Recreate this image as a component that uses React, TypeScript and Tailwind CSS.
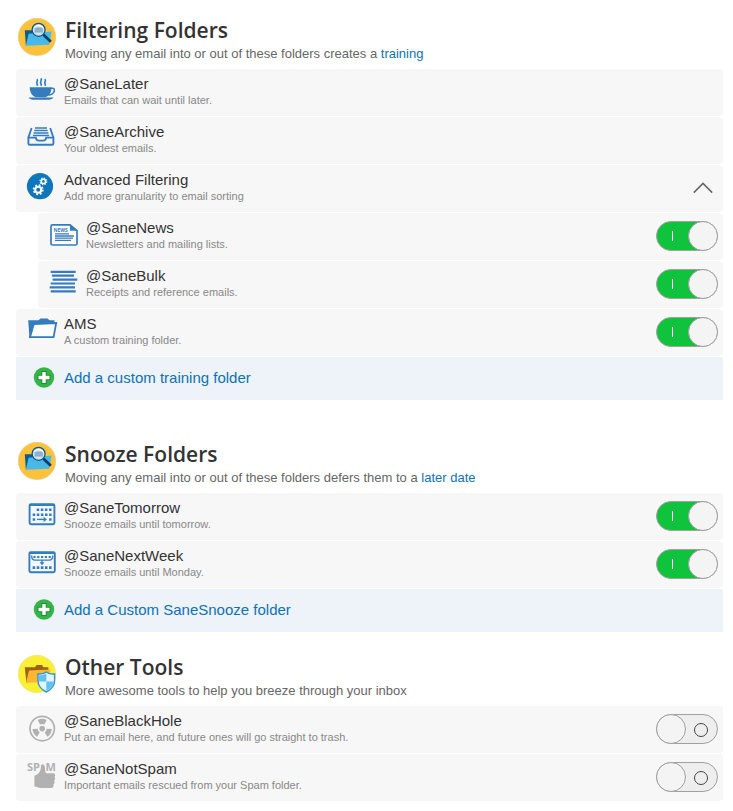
import { useState, type ReactNode } from "react";

type Folder = {
  id: string;
  name: string;
  description: string;
  icon: ReactNode;
  enabled?: boolean;
  nested?: boolean;
  expandable?: boolean;
};

type Section = {
  title: string;
  intro: string;
  link?: string;
  badge: ReactNode;
  folders: Folder[];
  addLabel?: string;
  spacing: string;
};

const BLUE = "#357cbf";
const GREY = "#b1b1b1";

function IconCell({ children }: { children: ReactNode }) {
  return (
    <svg viewBox="0 0 48 47" className="h-[47px] w-12 shrink-0" fill="none" aria-hidden="true">
      {children}
    </svg>
  );
}

function CupIcon() {
  return (
    <IconCell>
      <path d="M13.7 18.2H35.5C35.5 23 33.5 26.5 29.5 28.3H19.7C15.7 26.5 13.7 23 13.7 18.2Z" fill={BLUE} />
      <path d="M12.7 28.6H37.6C36.5 30 35 30.7 33 30.7H17C15 30.7 13.5 30 12.7 28.6Z" fill={BLUE} />
      <path d="M35 19.3H36.6C38.8 19.3 38.8 22 37.6 23.6C36.5 25.2 34.5 26 32.5 26.2" stroke={BLUE} strokeWidth="1.6" />
      <path
        d="M20.8 10.2C22.8 11.8 19.8 13 21 14.6C21.6 15.4 21.6 15.9 20.8 16.8M24.8 9.4C26.8 11.4 23.6 12.6 24.8 14.2C25.5 15.1 25.5 15.9 24.8 16.8M28.8 10.2C30.8 11.8 27.8 13 29 14.6C29.6 15.4 29.6 15.9 28.8 16.8"
        stroke={BLUE}
        strokeWidth="1.7"
      />
    </IconCell>
  );
}

function ArchiveIcon() {
  return (
    <IconCell>
      <path
        d="M12.4 20.6H19.8C20.2 22.8 21 23.6 22.6 23.6H27.4C29 23.6 29.8 22.8 30.2 20.6H37.4V26.4C37.4 27.4 37 27.8 36 27.8H13.8C12.8 27.8 12.4 27.4 12.4 26.4Z"
        stroke={BLUE}
        strokeWidth="1.9"
      />
      <path d="M12.4 20.6L15.6 11M37.4 20.6L34.2 11" stroke={BLUE} strokeWidth="1.8" />
      <path d="M19 11H31M18.3 13.5H31.7M17.6 16H32.4M16.9 18.5H33.1" stroke={BLUE} strokeWidth="1.4" />
    </IconCell>
  );
}

function GearsIcon() {
  return (
    <IconCell>
      <circle cx="24" cy="21.2" r="13.1" fill="#0e76bc" />
      <circle cx="22.2" cy="24.7" r="3" stroke="#fff" strokeWidth="2" />
      <circle cx="22.2" cy="24.7" r="4.6" stroke="#fff" strokeWidth="1.8" strokeDasharray="1.8 1.81" />
      <circle cx="27.4" cy="16.4" r="2.1" stroke="#fff" strokeWidth="1.5" />
      <circle cx="27.4" cy="16.4" r="3.3" stroke="#fff" strokeWidth="1.3" strokeDasharray="1.3 1.29" />
    </IconCell>
  );
}

function NewsIcon() {
  return (
    <IconCell>
      <path
        d="M14.5 11.8H32L39 17.6V30.4C39 31.4 38.4 32 37.4 32H14.5C13.5 32 13 31.4 13 30.4V13.4C13 12.4 13.5 11.8 14.5 11.8Z"
        fill="#fff"
        stroke={BLUE}
        strokeWidth="1.7"
      />
      <path d="M32 11.2V17.8H39.4Z" fill={BLUE} />
      <text x="15.4" y="18.6" fontSize="5" fontWeight="700" fontFamily="Open Sans, sans-serif" fill={BLUE}>
        NEWS
      </text>
      <path d="M17 20.8H31M17 23H36M17 25.2H35M17 27.4H33" stroke={BLUE} strokeWidth="1.3" />
    </IconCell>
  );
}

function BulkIcon() {
  return (
    <IconCell>
      <path d="M12.7 10.8H37.7M14 14.7H36M14.6 18.6H39.3M12.7 22.5H37M11.7 26.4H37M12.7 30.3H37.7" stroke={BLUE} strokeWidth="2.2" />
    </IconCell>
  );
}

function FolderIcon() {
  return (
    <IconCell>
      <path d="M12.2 11.2H22.5L24.5 9.6H31.5L33.5 11.2H38.5V14.4H18.5L14.6 29H13.5Z" fill={BLUE} />
      <path d="M17.8 15L40.2 14L37.6 28.2H14Z" fill="#fbfcfe" stroke={BLUE} strokeWidth="1.8" />
    </IconCell>
  );
}

function TomorrowIcon() {
  return (
    <IconCell>
      <rect x="13.6" y="11.2" width="24.8" height="20" rx="1.4" fill="#f3f8fd" stroke={BLUE} strokeWidth="1.9" />
      <path d="M13.4 12H38.4" stroke={BLUE} strokeWidth="2" />
      <path d="M20.7 16.8H35.6M16.7 21.7H35.6" stroke={BLUE} strokeWidth="2.5" strokeDasharray="2.5 1.6" />
      <path d="M16.7 26.4H19.2M33.1 26.4H35.6" stroke={BLUE} strokeWidth="2.5" />
      <path d="M21 26.4H29" stroke={BLUE} strokeWidth="1.4" />
      <path d="M27.6 23.8L31 26.4L27.6 29Z" fill={BLUE} />
    </IconCell>
  );
}

function NextWeekIcon() {
  return (
    <IconCell>
      <rect x="13.4" y="11.2" width="25.4" height="20" rx="1.4" fill="#f3f8fd" stroke={BLUE} strokeWidth="1.9" />
      <path d="M13.2 12H39" stroke={BLUE} strokeWidth="2" />
      <path d="M15.6 14.5C15.6 17.5 17 19.2 19 19.2H33.2C35.2 19.2 36.8 17.5 36.8 14.5" stroke={BLUE} strokeWidth="1.3" />
      <path d="M17.4 16H35.4" stroke={BLUE} strokeWidth="2.2" strokeDasharray="2.2 1.6" />
      <path d="M26 19V22" stroke={BLUE} strokeWidth="1.3" />
      <path d="M23.6 21.3H28.4L26 24.2Z" fill={BLUE} />
      <path d="M16.6 26.6H35.8" stroke={BLUE} strokeWidth="2.6" strokeDasharray="2.6 1.5" />
    </IconCell>
  );
}

function RadiationIcon() {
  return (
    <IconCell>
      <circle cx="26.2" cy="22.6" r="12.2" stroke={GREY} strokeWidth="1.7" />
      <circle cx="26.2" cy="22.6" r="2.8" fill={GREY} />
      {["rotate(0 26.2 22.6)", "rotate(120 26.2 22.6)", "rotate(240 26.2 22.6)"].map((turn) => (
        <path key={turn} d="M24.1 18.6L21.7 14A9.7 9.7 0 0 1 30.7 14L28.3 18.6A4.6 4.6 0 0 0 24.1 18.6Z" fill={GREY} transform={turn} />
      ))}
    </IconCell>
  );
}

function SpamIcon() {
  return (
    <IconCell>
      <g fontSize="11" fontWeight="700" fontFamily="Open Sans, sans-serif" fill={GREY}>
        <text x="11" y="17.4">SP</text>
        <text x="29.6" y="17.4">M</text>
      </g>
      <path
        d="M25.6 10.4C27.6 9.8 28.8 11.6 29 13.6C29.2 15.4 29 17.6 30 19.2H37C39.4 19.2 39.8 22 38.2 22.8C39.6 23.6 39.4 26 38 26.6C39 27.6 38.8 29.6 37.4 30.2C38.2 31.8 37 34 35 34H24.6C22.6 34 21.4 32.6 18.4 32.6V21.6C21 21 23.4 18.8 24.4 16.2C25 14.4 24.6 12 25.6 10.4Z"
        fill={GREY}
      />
    </IconCell>
  );
}

function PlusIcon() {
  return (
    <svg viewBox="0 0 48 43" className="h-[43px] w-12 shrink-0" fill="none" aria-hidden="true">
      <circle cx="28" cy="20.5" r="10.2" fill="#35b44a" />
      <path d="M28 14V27M21.5 20.5H34.5" stroke="#238c37" strokeWidth="5.4" />
      <path d="M28 15V26M22.5 20.5H33.5" stroke="#fff" strokeWidth="3.4" />
    </svg>
  );
}

function SearchFolderBadge() {
  return (
    <svg viewBox="0 0 38 38" className="size-[38px] shrink-0" fill="none" aria-hidden="true">
      <circle cx="19" cy="19" r="18.8" fill="#fdc13a" stroke="#d9cdb0" strokeWidth="0.5" />
      <path d="M6.8 12.3H14L16 14.2H30V17L9 27.3H7.8Z" fill="#0b5c8c" />
      <path d="M10.6 15.8L33.6 13.4L31.2 26.8L7.8 27.8Z" fill="#46b9ea" />
      <path d="M25.3 16.5L32.8 23.8" stroke="#0a3c5f" strokeWidth="2.8" />
      <circle cx="20.6" cy="11.8" r="6.5" fill="#cfe3f0" stroke="#0f5580" strokeWidth="1.3" />
      <path d="M16.6 9.4H24.8V14.6H16.6Z" fill="#8fb0cc" />
      <path d="M16.2 10C17.6 6.9 23.2 6.7 25 9.8" stroke="#fff" strokeWidth="1.4" />
    </svg>
  );
}

function ShieldFolderBadge() {
  return (
    <svg viewBox="0 0 38 38" className="size-[38px] shrink-0 overflow-visible" fill="none" aria-hidden="true">
      <circle cx="19" cy="19" r="18.8" fill="#fbef36" stroke="#e6dc8a" strokeWidth="0.5" />
      <path d="M6.8 12.2H17L18.6 10H24L25.4 12.2H30.4V17L9 27.5H8.4Z" fill="#9b6314" />
      <path d="M11 15.6L32.6 14.6L30.4 27L8 27.8Z" fill="#fdb532" />
      <path
        d="M28.3 17L31 18.4C33 19 34.8 19.2 36.6 19V25.6C36.6 31 33 34.8 28.3 37C23.6 34.8 20 31 20 25.6V19C21.8 19.2 23.6 19 25.6 18.4Z"
        fill="#e2f4fd"
        stroke="#2b97d8"
        strokeWidth="1.4"
      />
      <path d="M28.3 18.4V26.6H21V20.2C23.8 20.2 26 19.8 28.3 18.4Z" fill="#62c1f0" />
      <path d="M28.3 26.6H35.6C35.4 31 32.4 33.8 28.3 35.7Z" fill="#62c1f0" />
    </svg>
  );
}

const sections: Section[] = [
  {
    title: "Filtering Folders",
    intro: "Moving any email into or out of these folders creates a",
    link: "training",
    badge: <SearchFolderBadge />,
    spacing: "mb-[42px]",
    addLabel: "Add a custom training folder",
    folders: [
      { id: "later", name: "@SaneLater", description: "Emails that can wait until later.", icon: <CupIcon /> },
      { id: "archive", name: "@SaneArchive", description: "Your oldest emails.", icon: <ArchiveIcon /> },
      { id: "advanced", name: "Advanced Filtering", description: "Add more granularity to email sorting", icon: <GearsIcon />, expandable: true },
      { id: "news", name: "@SaneNews", description: "Newsletters and mailing lists.", icon: <NewsIcon />, enabled: true, nested: true },
      { id: "bulk", name: "@SaneBulk", description: "Receipts and reference emails.", icon: <BulkIcon />, enabled: true, nested: true },
      { id: "ams", name: "AMS", description: "A custom training folder.", icon: <FolderIcon />, enabled: true },
    ],
  },
  {
    title: "Snooze Folders",
    intro: "Moving any email into or out of these folders defers them to a",
    link: "later date",
    badge: <SearchFolderBadge />,
    spacing: "mb-[23px]",
    addLabel: "Add a Custom SaneSnooze folder",
    folders: [
      { id: "tomorrow", name: "@SaneTomorrow", description: "Snooze emails until tomorrow.", icon: <TomorrowIcon />, enabled: true },
      { id: "nextweek", name: "@SaneNextWeek", description: "Snooze emails until Monday.", icon: <NextWeekIcon />, enabled: true },
    ],
  },
  {
    title: "Other Tools",
    intro: "More awesome tools to help you breeze through your inbox",
    badge: <ShieldFolderBadge />,
    spacing: "mb-0",
    folders: [
      { id: "blackhole", name: "@SaneBlackHole", description: "Put an email here, and future ones will go straight to trash.", icon: <RadiationIcon />, enabled: false },
      { id: "notspam", name: "@SaneNotSpam", description: "Important emails rescued from your Spam folder.", icon: <SpamIcon />, enabled: false },
    ],
  },
];

function Toggle({ id, initial }: { id: string; initial: boolean }) {
  const [on, setOn] = useState(initial);

  return (
    <span
      className={`relative mb-px flex h-[30px] w-[62px] shrink-0 items-center rounded-full border border-[#a0a0a0] ${
        on ? "justify-end bg-[#10c33c]" : "justify-start bg-[#eeeeee]"
      }`}
    >
      <input
        id={id}
        type="checkbox"
        role="switch"
        checked={on}
        onChange={(e) => setOn(e.target.checked)}
        className="absolute inset-0 z-10 cursor-pointer appearance-none rounded-full"
      />
      {on && <span className="mr-4 h-2.5 w-px bg-white" />}
      <span className="-m-px size-[30px] rounded-full border border-[#a0a0a0] bg-[#f4f4f4]" />
      {!on && <span className="mt-0.5 ml-[9px] size-3.5 rounded-full border border-[#444444]" />}
    </span>
  );
}

function FolderRow({ folder, open, onToggleOpen }: { folder: Folder; open: boolean; onToggleOpen: () => void }) {
  return (
    <li className={`flex items-center rounded-sm bg-[#f7f7f7] pr-[5px] ${folder.nested ? "ml-[22px]" : ""}`}>
      {folder.icon}
      <label htmlFor={folder.id} className="min-w-0 flex-1 pb-px">
        <span className="block text-[15px] leading-4 text-[#333333]">{folder.name}</span>
        <span className="block text-[11px] leading-4 text-[#888888]">{folder.description}</span>
      </label>
      {folder.enabled !== undefined && <Toggle id={folder.id} initial={folder.enabled} />}
      {folder.expandable && (
        <button id={folder.id} type="button" aria-expanded={open} onClick={onToggleOpen} className="cursor-pointer px-[5px] pb-px">
          <svg viewBox="0 0 20 12" className={`h-3 w-5 ${open ? "" : "rotate-180"}`} fill="none" stroke="#666666" strokeWidth="1.5" aria-hidden="true">
            <path d="M0.8 10.6L10 1.4L19.2 10.6" />
          </svg>
        </button>
      )}
    </li>
  );
}

function FolderSection({ section }: { section: Section }) {
  const [open, setOpen] = useState(true);
  const visible = section.folders.filter((folder) => open || !folder.nested);

  return (
    <section className={section.spacing}>
      <header className="flex items-start gap-[9px] pb-[3px] pl-0.5">
        {section.badge}
        <div>
          <h2 className="font-['Open_Sans',sans-serif] text-[21px] leading-6 font-semibold text-[#333333]">{section.title}</h2>
          <p className="text-[13px] leading-6 text-[#666666]">
            {section.intro}
            {section.link && (
              <>
                {" "}
                <a href="#" className="text-[#0e72b5]">
                  {section.link}
                </a>
              </>
            )}
          </p>
        </div>
      </header>
      <ul className="flex flex-col gap-px">
        {visible.map((folder) => (
          <FolderRow key={folder.id} folder={folder} open={open} onToggleOpen={() => setOpen(!open)} />
        ))}
      </ul>
      {section.addLabel && (
        <button type="button" className="mt-px flex w-full cursor-pointer items-center bg-[#edf3f8] text-left text-[15px] text-[#0e72b5]">
          <PlusIcon />
          {section.addLabel}
        </button>
      )}
    </section>
  );
}

export default function App() {
  return (
    <main className="bg-white pt-[18px] pr-2.5 pb-2.5 pl-4 font-['Liberation_Sans',Arial,sans-serif]">
      {sections.map((section) => (
        <FolderSection key={section.title} section={section} />
      ))}
    </main>
  );
}
